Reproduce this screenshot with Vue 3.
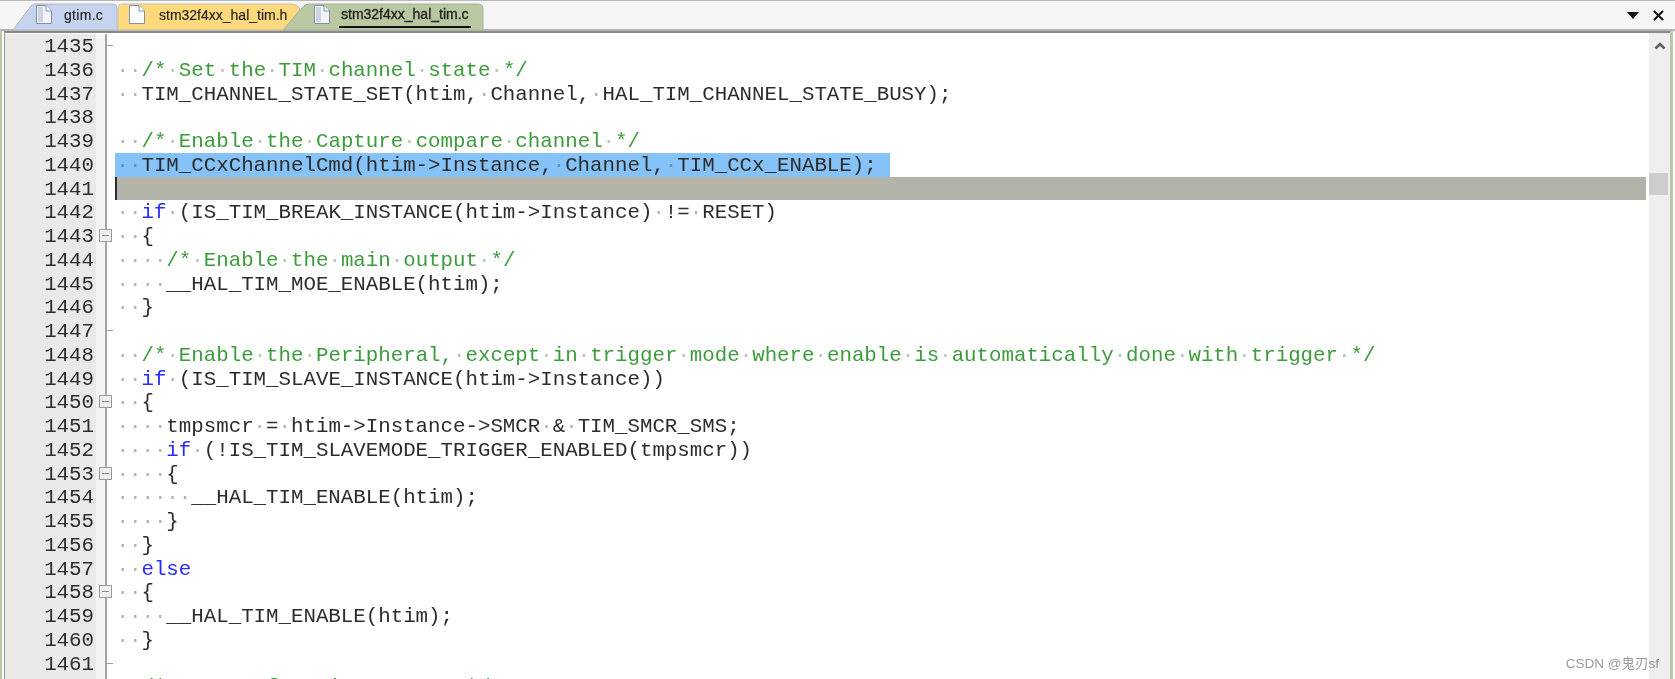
<script setup>
const source = [
  ['', 'tick'],
  ['  /* Set the TIM channel state */'],
  ['  TIM_CHANNEL_STATE_SET(htim, Channel, HAL_TIM_CHANNEL_STATE_BUSY);'],
  [''],
  ['  /* Enable the Capture compare channel */'],
  ['  TIM_CCxChannelCmd(htim->Instance, Channel, TIM_CCx_ENABLE);', '', 'sel'],
  ['', '', 'cur'],
  ['  if (IS_TIM_BREAK_INSTANCE(htim->Instance) != RESET)'],
  ['  {', 'box'],
  ['    /* Enable the main output */'],
  ['    __HAL_TIM_MOE_ENABLE(htim);'],
  ['  }'],
  ['', 'tick'],
  ['  /* Enable the Peripheral, except in trigger mode where enable is automatically done with trigger */'],
  ['  if (IS_TIM_SLAVE_INSTANCE(htim->Instance))'],
  ['  {', 'box'],
  ['    tmpsmcr = htim->Instance->SMCR & TIM_SMCR_SMS;'],
  ['    if (!IS_TIM_SLAVEMODE_TRIGGER_ENABLED(tmpsmcr))'],
  ['    {', 'box'],
  ['      __HAL_TIM_ENABLE(htim);'],
  ['    }'],
  ['  }'],
  ['  else'],
  ['  {', 'box'],
  ['    __HAL_TIM_ENABLE(htim);'],
  ['  }'],
  ['', 'tick'],
  ['  /* Return function status */']
]

function tokenize(text) {
  const parts = []
  const match = /^( *)(\/\*.*\*\/)$/.exec(text)
  if (match) {
    if (match[1]) parts.push({ t: '·'.repeat(match[1].length), c: 'dot' })
    match[2].split(/( +)/).forEach((s) => {
      if (!s) return
      parts.push(s[0] === ' ' ? { t: '·'.repeat(s.length), c: 'dotc' } : { t: s, c: 'com' })
    })
    return parts
  }
  text.split(/( +)/).forEach((s) => {
    if (!s) return
    if (s[0] === ' ') parts.push({ t: '·'.repeat(s.length), c: 'dot' })
    else if (s === 'if' || s === 'else') parts.push({ t: s, c: 'kw' })
    else parts.push({ t: s, c: 'txt' })
  })
  return parts
}

const rows = source.map(([text, fold, mark], i) => ({
  num: 1435 + i,
  fold: fold || '',
  mark: mark || '',
  parts: tokenize(text)
}))
</script>

<template>
  <div class="app">
    <header class="tabbar">
      <svg class="tabshapes" width="500" height="31" viewBox="0 0 500 31">
        <path d="M117 30 V8 Q117 4 112 4 H36 Q33 4 31 6 L13 30 Z" fill="#c6d3ee" stroke="#b4b8ba" stroke-width="1" />
        <path d="M284 30 L300 9 Q297 4 293 4 H122 Q118 4 118 9 V30 Z" fill="#ffd97c" stroke="#c4c2b0" stroke-width="1" />
        <path d="M283 30 L303 7 Q305 4 309 4 H478 Q483 4 483 9 V30 Z" fill="#b9c8a0" stroke="#a9ae9e" stroke-width="1" />
      </svg>
      <div class="tab tab-a">
        <svg class="doc" width="18" height="21" viewBox="0 0 18 21">
          <path d="M1.5 1.5 H11 L16.5 7 V19.5 H1.5 Z" fill="#f2f4fa" stroke="#7f8fb0" />
          <path d="M3 3 H8 V18 H3 Z" fill="#cfd3dc" />
          <path d="M11 1.5 V7 H16.5" fill="#fff" stroke="#7f8fb0" />
        </svg>
        <span>gtim.c</span>
      </div>
      <div class="tab tab-b">
        <svg class="doc" width="18" height="21" viewBox="0 0 18 21">
          <path d="M1.5 1.5 H11 L16.5 7 V19.5 H1.5 Z" fill="#fbfcff" stroke="#7f8fb0" />
          <path d="M11 1.5 V7 H16.5" fill="#fff" stroke="#7f8fb0" />
        </svg>
        <span>stm32f4xx_hal_tim.h</span>
      </div>
      <div class="tab tab-c">
        <svg class="doc" width="18" height="21" viewBox="0 0 18 21">
          <path d="M1.5 1.5 H11 L16.5 7 V19.5 H1.5 Z" fill="#f2f4fa" stroke="#7f8fb0" />
          <path d="M3 3 H8 V18 H3 Z" fill="#cfd3dc" />
          <path d="M11 1.5 V7 H16.5" fill="#fff" stroke="#7f8fb0" />
        </svg>
        <span class="active">stm32f4xx_hal_tim.c</span>
      </div>
      <div class="controls">
        <svg width="12" height="7" viewBox="0 0 12 7"><path d="M0 0 H12 L6 7 Z" fill="#111" /></svg>
        <svg width="11" height="11" viewBox="0 0 11 11"><path d="M1 1 L10 10 M10 1 L1 10" stroke="#111" stroke-width="2" fill="none" /></svg>
      </div>
    </header>

    <div class="frame">
      <div class="editor">
        <div class="lines">
          <div v-for="row in rows" :key="row.num" class="row">
            <div class="num">{{ row.num }}</div>
            <div class="fold">
              <span v-if="row.fold === 'tick'" class="tick"></span>
              <span v-if="row.fold === 'box'" class="box"></span>
            </div>
            <div class="code" :class="row.mark">
              <div class="text" :class="row.mark === 'sel' ? 'selected' : ''">
                <span v-for="(p, i) in row.parts" :key="i" :class="p.c">{{ p.t }}</span>
              </div>
            </div>
          </div>
        </div>
        <aside class="scrollbar">
          <svg class="chev" width="12" height="8" viewBox="0 0 12 8"><path d="M1.5 6.5 L6 2 L10.5 6.5" stroke="#5f5f5f" stroke-width="2.6" fill="none" /></svg>
          <div class="thumb"></div>
        </aside>
      </div>
    </div>
    <div class="mark">CSDN @鬼刃sf</div>
  </div>
</template>

<style>
html, body { margin: 0; background: #fff; }
</style>

<style scoped>
.app {
  position: relative;
  width: 1675px;
  height: 679px;
  overflow: hidden;
  display: flex;
  flex-direction: column;
  background: #fff;
  filter: blur(0.3px);
}
.tabbar {
  position: relative;
  flex: none;
  height: 28px;
  display: flex;
  align-items: center;
  background: #f6f6f6;
  border-top: 1px solid #b8b8b8;
  border-bottom: 2px solid #b4b4b4;
  box-sizing: content-box;
}
.tabshapes {
  position: absolute;
  left: 0;
  top: -1px;
}
.tab {
  position: relative;
  display: flex;
  align-items: center;
  height: 28px;
  font: 14px/28px "Liberation Sans", sans-serif;
  color: #222;
  box-sizing: border-box;
  -webkit-text-stroke: 0.15px #222;
}
.tab .doc { flex: none; margin-top: -1px; }
.tab-a { margin-left: 35px; width: 82px; gap: 11px; letter-spacing: 0.3px; }
.tab-b { margin-left: 11px; width: 165px; gap: 13px; }
.tab-c { margin-left: 20px; width: 170px; gap: 10px; -webkit-text-stroke: 0.35px #222; }
.active { position: relative; border-bottom: 2px solid #111; line-height: 24px; padding: 0 2px; margin-left: -2px; }
.controls {
  margin-left: auto;
  display: flex;
  align-items: center;
  gap: 14px;
  padding-right: 11px;
}
.frame {
  flex: 1;
  min-height: 0;
  padding: 0 2px 0 3px;
  background: linear-gradient(#b9c8a0, #b9c8a0) left / 2px 100% no-repeat,
    linear-gradient(#b9c8a0, #b9c8a0) right 2px top / 3px 100% no-repeat, #fff;
}
.editor {
  height: 100%;
  display: flex;
  margin-left: 1px;
  margin-right: 3px;
  border-top: 2px solid #8a8a8a;
  border-left: 1px solid #9a9a9a;
  background: #fff;
  box-sizing: border-box;
}
.lines {
  flex: 1;
  min-width: 0;
  overflow: hidden;
  padding-top: 1px;
}
.row {
  display: flex;
  height: 23.75px;
  font: 20.78px/25.5px "Liberation Mono", monospace;
  color: #2c2c2c;
}
.num {
  flex: none;
  width: 91px;
  padding-right: 2px;
  box-sizing: border-box;
  text-align: right;
  background: #e9e9e9;
  height: 23.75px;
}
.fold {
  position: relative;
  flex: none;
  width: 19px;
  background: linear-gradient(90deg, #f4f4f4 0 9px, #a4a4a4 9px 11px, #fff 11px);
}
.tick {
  position: absolute;
  left: 10px;
  top: 11px;
  width: 7px;
  height: 1px;
  background: #a0a0a0;
}
.box {
  position: absolute;
  left: 3px;
  top: 5px;
  width: 13px;
  height: 13px;
  box-sizing: border-box;
  border: 1px solid #9b9b9b;
  background: linear-gradient(#8a8a8a, #8a8a8a) center / 7px 1px no-repeat, #efefef;
}
.code {
  flex: 1;
  min-width: 0;
  margin-right: 3px;
  white-space: pre;
}
.code.cur {
  background: #b2b4aa;
  box-shadow: inset 2px 0 0 #2c2c2c;
}
.text { display: inline-block; height: 23.75px; vertical-align: top; padding-left: 1.5px; }
.selected { background: #84c2f8; padding-right: 13px; }
.dot { color: #b4b4b4; }
.selected .dot, .selected .dotc { color: #5f93c0; }
.dotc { color: #b4c8b4; }
.txt { color: #2c2c2c; }
.com { color: #3c9c3c; }
.kw { color: #2b2bff; }
.scrollbar {
  position: relative;
  flex: none;
  width: 21px;
  background: #efefef;
}
.chev {
  display: block;
  margin: 9px auto 0;
}
.thumb {
  position: absolute;
  left: 0;
  top: 140px;
  width: 19px;
  height: 22px;
  background: #cdcdcd;
}
.mark {
  position: absolute;
  right: 16px;
  top: 656px;
  font: 13.5px/16px "Liberation Sans", "Noto Sans CJK SC", sans-serif;
  color: rgba(70, 70, 70, 0.55);
}
</style>
